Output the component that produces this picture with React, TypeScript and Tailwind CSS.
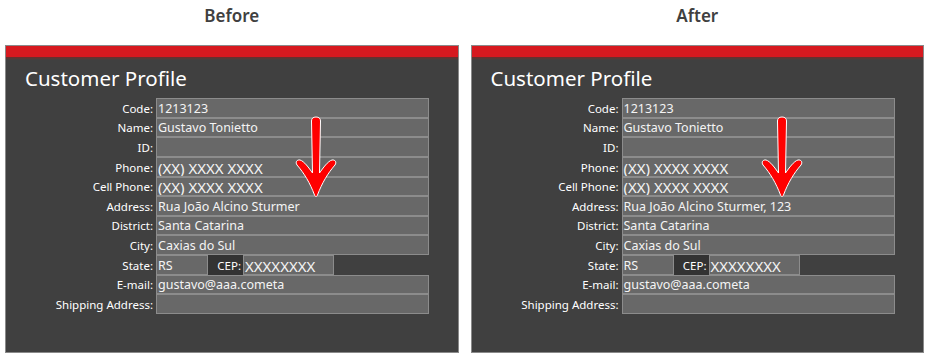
import React from "react";

type Row = { label: string; value?: string; big?: boolean };

function Arrow() {
  return (
    <svg
      className="absolute left-[288px] top-[69px]"
      width="44"
      height="84"
      viewBox="0 0 44 84"
    >
      <path
        d="M22 2 C25 2 26.5 3.5 26.5 6 L25.5 58 C29 53 34 46 38 45 C41 44.5 43 47 41 50 C34 58 28 68 23.5 80 C22.8 82 21.2 82 20.5 80 C16 68 10 58 3 50 C1 47 3 44.5 6 45 C10 46 15 53 18.5 58 L17.5 6 C17.5 3.5 19 2 22 2 Z"
        fill="#ff0000"
        stroke="#ffffff"
        strokeWidth="1"
        strokeLinejoin="round"
      />
    </svg>
  );
}

function Field({ value, big, w = "w-[273px]" }: { value?: string; big?: boolean; w?: string }) {
  return (
    <div
      className={`${w} h-full bg-[#686868] border border-[#8c8c8c] flex items-end pl-[1px] overflow-hidden whitespace-nowrap text-[#f4f4f4] ${
        big ? "text-[15px] leading-[16px]" : "text-[12.5px] leading-[16px]"
      }`}
    >
      {value}
    </div>
  );
}

function Label({ text, w = "w-[150px]" }: { text: string; w?: string }) {
  return (
    <div className={`${w} pr-[3px] text-right text-[11.5px] leading-[16px] text-white flex items-end justify-end pb-[1px] whitespace-nowrap`}>
      {text}
    </div>
  );
}

function Profile({ address }: { address: string }) {
  const rows: Row[] = [
    { label: "Code:", value: "1213123" },
    { label: "Name:", value: "Gustavo Tonietto" },
    { label: "ID:" },
    { label: "Phone:", value: "(XX) XXXX XXXX", big: true },
    { label: "Cell Phone:", value: "(XX) XXXX XXXX", big: true },
    { label: "Address:", value: address },
    { label: "District:", value: "Santa Catarina" },
    { label: "City:", value: "Caxias do Sul" },
  ];
  const rest: Row[] = [
    { label: "E-mail:", value: "gustavo@aaa.cometa" },
    { label: "Shipping Address:" },
  ];

  const renderRow = (r: Row) => (
    <div key={r.label} className="flex h-[19.65px] items-stretch">
      <Label text={r.label} />
      <Field value={r.value} big={r.big} />
    </div>
  );

  return (
    <div className="relative flex-1 h-[308px] border border-[#8a8a8a] bg-[#404040] flex flex-col">
      <div className="h-[11px] bg-[#d7191f]" />
      <div className="h-[3px] bg-gradient-to-b from-[#6e2a2a] to-[#404040]" />
      <div className="pl-[19px] pt-[4px] h-[38px] text-[20.5px] leading-[28px] text-white">
        Customer Profile
      </div>
      <div className="flex flex-col">
        {rows.map(renderRow)}
        <div className="flex h-[19.65px] items-stretch">
          <Label text="State:" />
          <Field value="RS" w="w-[52px]" />
          <div className="w-[35px] h-full bg-[#333333] text-white text-[11.5px] leading-[16px] flex items-end justify-end pr-[2px] pb-[1px]">
            CEP:
          </div>
          <Field value="XXXXXXXX" big w="w-[91px]" />
        </div>
        {rest.map(renderRow)}
      </div>
      <Arrow />
    </div>
  );
}

export default function App() {
  return (
    <div
      className="w-[926px] h-[357px] bg-white overflow-hidden"
      style={{ fontFamily: '"Noto Sans", "Open Sans", sans-serif' }}
    >
      <div className="flex h-[45px] pl-[5px] pr-[2px] gap-[12px]">
        <div className="flex-1 text-center pt-[5px] text-[17px] leading-[22px] font-semibold text-[#404040]">
          Before
        </div>
        <div className="flex-1 text-center pt-[5px] text-[17px] leading-[22px] font-semibold text-[#404040]">
          After
        </div>
      </div>
      <div className="flex pl-[5px] pr-[2px] gap-[12px]">
        <Profile address="Rua João Alcino Sturmer" />
        <Profile address="Rua João Alcino Sturmer, 123" />
      </div>
    </div>
  );
}
